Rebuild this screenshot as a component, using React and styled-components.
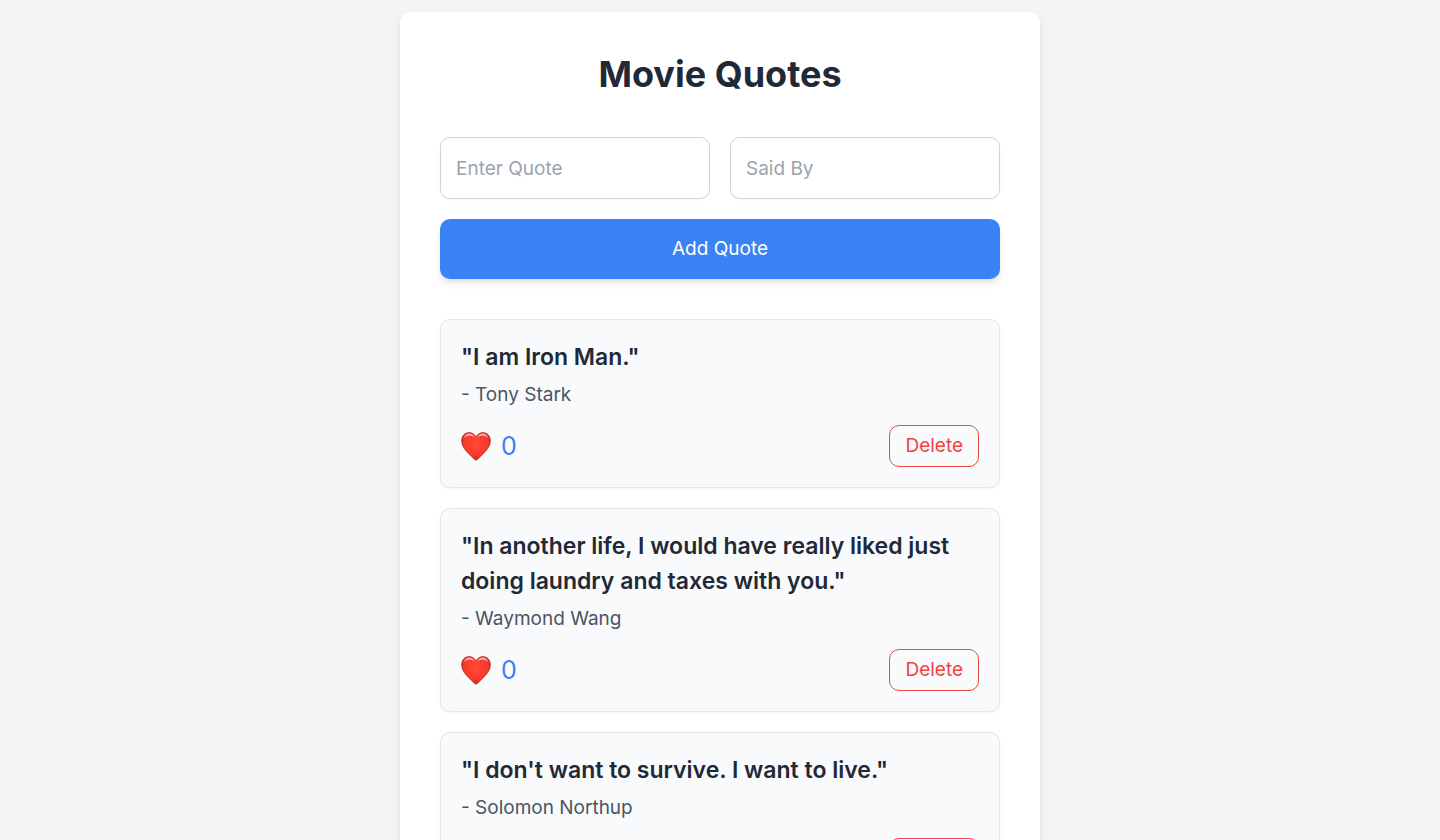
import React, { useState } from "react";
import styled, { createGlobalStyle } from "styled-components";

const GlobalStyle = createGlobalStyle`
  *, *::before, *::after { box-sizing: border-box; }
  body {
    margin: 0;
    background: #f3f4f6;
    color: #1f2937;
    font-family: Inter, "Liberation Sans", sans-serif;
    font-size: 19px;
    line-height: 30px;
    -webkit-font-smoothing: antialiased;
  }
  button, input { font: inherit; }
`;

const Page = styled.div`
  display: flex;
  justify-content: center;
  padding: 12px;
`;

const Panel = styled.main`
  width: 100%;
  max-width: 640px;
  padding: 40px;
  border-radius: 10px;
  background: #fff;
  box-shadow: 0 5px 8px -1px rgba(0, 0, 0, 0.1), 0 2px 5px -2px rgba(0, 0, 0, 0.1);
`;

const Title = styled.h1`
  margin: 0 0 40px;
  font-size: 36px;
  line-height: 45px;
  font-weight: 700;
  text-align: center;
`;

const QuoteForm = styled.form`
  display: grid;
  grid-template-columns: 1fr 1fr;
  gap: 20px;
  margin-bottom: 40px;
`;

const TextInput = styled.input`
  width: 100%;
  min-width: 0;
  height: 62px;
  padding: 15px;
  border: 1px solid #d1d5db;
  border-radius: 10px;
  background: #fff;
  color: #1f2937;
  box-shadow: 0 1px 3px rgba(0, 0, 0, 0.05);

  &::placeholder { color: #9ca3af; opacity: 1; }
`;

const AddButton = styled.button`
  grid-column: 1 / -1;
  padding: 15px;
  border: 0;
  border-radius: 10px;
  background: #3b82f6;
  color: #fff;
  cursor: pointer;
  box-shadow: 0 5px 8px -1px rgba(0, 0, 0, 0.1), 0 2px 5px -2px rgba(0, 0, 0, 0.1);
`;

const QuoteList = styled.ul`
  display: flex;
  flex-direction: column;
  gap: 20px;
  margin: 0;
  padding: 0;
  list-style: none;
`;

const Card = styled.li`
  padding: 20px;
  border: 1px solid #e5e7eb;
  border-radius: 10px;
  background: #f9fafb;
  box-shadow: 0 1px 3px rgba(0, 0, 0, 0.05);
`;

const QuoteText = styled.p`
  margin: 0 0 5px;
  font-size: 23px;
  line-height: 35px;
  font-weight: 600;
`;

const Author = styled.p`
  margin: 0 0 15px;
  color: #4b5563;
`;

const CardActions = styled.div`
  display: flex;
  align-items: center;
  justify-content: space-between;
`;

const LikeButton = styled.button`
  display: flex;
  align-items: center;
  gap: 10px;
  padding: 0;
  border: 0;
  background: none;
  color: #3b82f6;
  font-size: 25px;
  line-height: 35px;
  cursor: pointer;
`;

const DeleteButton = styled.button`
  padding: 5px 15px;
  border: 1px solid #ef4444;
  border-radius: 10px;
  background: transparent;
  color: #ef4444;
  cursor: pointer;
`;

function HeartIcon({ id }) {
  const outline =
    "M15 29.2C14 29.2 11.5 26.6 8.5 23.6C4.6 19.7 0.6 15.2 0.6 9.8C0.6 5 3.8 1.6 8 1.6C11.1 1.6 13.7 3.2 15 6C16.3 3.2 18.9 1.6 22 1.6C26.2 1.6 29.4 5 29.4 9.8C29.4 15.2 25.4 19.7 21.5 23.6C18.5 26.6 16 29.2 15 29.2Z";
  return (
    <svg width="30" height="30" viewBox="0 0 30 30" aria-hidden="true">
      <defs>
        <radialGradient id={`${id}-body`} cx="50%" cy="42%" r="62%">
          <stop offset="0" stopColor="#ff4a36" />
          <stop offset="0.65" stopColor="#fb3a2a" />
          <stop offset="1" stopColor="#bf1a12" />
        </radialGradient>
        <linearGradient id={`${id}-shine`} x1="0" y1="0" x2="0" y2="1">
          <stop offset="0" stopColor="#ffe0da" stopOpacity="0.95" />
          <stop offset="1" stopColor="#ff7d6a" stopOpacity="0.1" />
        </linearGradient>
      </defs>
      <path d={outline} fill={`url(#${id}-body)`} stroke="#b5281f" strokeWidth="0.7" />
      <path
        d="M2.2 9C2.4 5.2 4.8 2.8 8 2.8C10.9 2.8 13.2 4.5 14.2 7.4C12.6 5.6 10.4 4.6 8 4.8C5.4 5 3.4 6.6 2.2 9Z"
        fill={`url(#${id}-shine)`}
      />
      <path
        d="M27.8 9C27.6 5.2 25.2 2.8 22 2.8C19.1 2.8 16.8 4.5 15.8 7.4C17.4 5.6 19.6 4.6 22 4.8C24.6 5 26.6 6.6 27.8 9Z"
        fill={`url(#${id}-shine)`}
      />
    </svg>
  );
}

const initialQuotes = [
  { id: 1, text: "I am Iron Man.", author: "Tony Stark", likes: 0 },
  {
    id: 2,
    text: "In another life, I would have really liked just doing laundry and taxes with you.",
    author: "Waymond Wang",
    likes: 0,
  },
  { id: 3, text: "I don't want to survive. I want to live.", author: "Solomon Northup", likes: 0 },
];

export default function App() {
  const [quotes, setQuotes] = useState(initialQuotes);
  const [text, setText] = useState("");
  const [author, setAuthor] = useState("");

  const addQuote = (event) => {
    event.preventDefault();
    if (!text.trim() || !author.trim()) return;
    setQuotes([...quotes, { id: Date.now(), text, author, likes: 0 }]);
    setText("");
    setAuthor("");
  };

  const likeQuote = (id) =>
    setQuotes(quotes.map((q) => (q.id === id ? { ...q, likes: q.likes + 1 } : q)));

  const deleteQuote = (id) => setQuotes(quotes.filter((q) => q.id !== id));

  return (
    <>
      <GlobalStyle />
      <Page>
        <Panel>
          <Title>Movie Quotes</Title>
          <QuoteForm onSubmit={addQuote}>
            <TextInput
              type="text"
              aria-label="Enter Quote"
              placeholder="Enter Quote"
              value={text}
              onChange={(e) => setText(e.target.value)}
            />
            <TextInput
              type="text"
              aria-label="Said By"
              placeholder="Said By"
              value={author}
              onChange={(e) => setAuthor(e.target.value)}
            />
            <AddButton type="submit">Add Quote</AddButton>
          </QuoteForm>
          <QuoteList>
            {quotes.map((q) => (
              <Card key={q.id}>
                <QuoteText>{`"${q.text}"`}</QuoteText>
                <Author>{`- ${q.author}`}</Author>
                <CardActions>
                  <LikeButton type="button" onClick={() => likeQuote(q.id)}>
                    <HeartIcon id={`heart-${q.id}`} />
                    <span>{q.likes}</span>
                  </LikeButton>
                  <DeleteButton type="button" onClick={() => deleteQuote(q.id)}>
                    Delete
                  </DeleteButton>
                </CardActions>
              </Card>
            ))}
          </QuoteList>
        </Panel>
      </Page>
    </>
  );
}
